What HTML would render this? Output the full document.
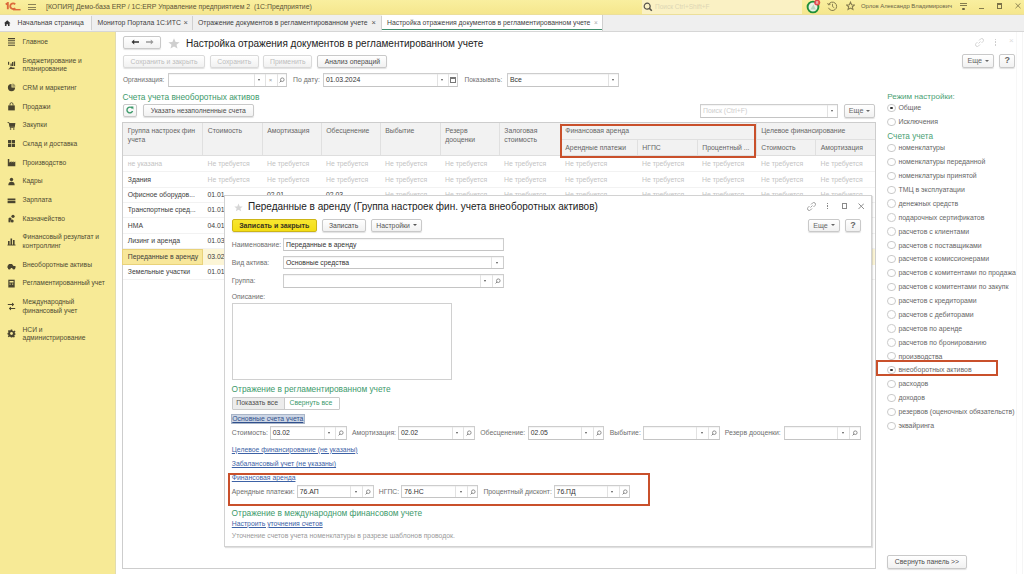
<!DOCTYPE html><html><head><meta charset="utf-8"><style>
*{margin:0;padding:0;box-sizing:border-box}
html,body{width:1024px;height:574px;overflow:hidden;background:#fff;font-family:"Liberation Sans",sans-serif}
.t{position:absolute;white-space:nowrap}
.b{position:absolute}
.btn{position:absolute;border:1px solid #c9c9c9;border-radius:2px;text-align:center;white-space:nowrap;box-shadow:0 1px 1px rgba(0,0,0,0.12)}
.inp{position:absolute;border:1px solid #cdcdcd;border-bottom-color:#c4c4c4;background:#fff;box-shadow:inset 0 1px 1px rgba(0,0,0,0.05)}
.u{text-decoration:underline}
</style></head><body>
<div class="b" style="left:0px;top:0px;width:1024.00px;height:15.00px;background:linear-gradient(#f9ef9f,#f5e68c)"></div>
<div class="b" style="left:0px;top:14.2px;width:1024.00px;height:0.80px;background:#ecdf9a"></div>
<svg class="b" style="left:4.8px;top:2px" width="16" height="8.5" viewBox="0 0 17 9"><path d="M0.8 2.6 L3 1 L3 7.8" fill="none" stroke="#dc6a3c" stroke-width="2"/><path d="M10.8 2.4 A3 3 0 1 0 10.8 6.4" fill="none" stroke="#dc6a3c" stroke-width="2"/><rect x="8.5" y="7.4" width="8" height="1.5" fill="#dc6a3c"/></svg>
<div class="b" style="left:27.5px;top:4.0px;width:8.50px;height:1.10px;background:#8a8256"></div>
<div class="b" style="left:27.5px;top:6.5px;width:8.50px;height:1.10px;background:#8a8256"></div>
<div class="b" style="left:27.5px;top:9.0px;width:8.50px;height:1.10px;background:#8a8256"></div>
<div class="t" style="left:46px;top:1.50px;font-size:6.9px;line-height:10px;color:#5b5438;">[КОПИЯ] Демо-база ERP / 1С:ERP Управление предприятием 2&nbsp; (1С:Предприятие)</div>
<div class="b" style="left:642px;top:0px;width:160.00px;height:14.20px;background:#faf1c4"></div>
<svg class="b" style="left:643px;top:1.5px" width="10" height="10" viewBox="0 0 10 10"><circle cx="4.2" cy="4.2" r="3" fill="none" stroke="#55524a" stroke-width="1.2"/><path d="M6.4 6.4 L8.8 8.8" stroke="#55524a" stroke-width="1.5"/></svg>
<div class="t" style="left:655px;top:1.50px;font-size:6.5px;line-height:10px;color:#ddd6b4;">Поиск Ctrl+Shift+F</div>
<svg class="b" style="left:805px;top:0px" width="17" height="15" viewBox="0 0 17 15"><circle cx="8" cy="7" r="5.4" fill="#e9f3e6" stroke="#1f8f3a" stroke-width="1.9"/><path d="M5.3 9.6 L8.5 4.4 L10.8 9.6 Z" fill="#b8d8c0"/><circle cx="12.2" cy="2.6" r="3" fill="#e24a4a"/><text x="12.2" y="4.3" font-size="4.3" text-anchor="middle" fill="#fff" font-family="Liberation Sans">8</text></svg>
<svg class="b" style="left:827px;top:1px" width="11" height="11" viewBox="0 0 11 11"><path d="M1.6 3.6 A4.2 4.2 0 1 1 1.5 6.8" fill="none" stroke="#857c4e" stroke-width="1"/><path d="M0.6 2 L1.6 4 L3.6 3.2" fill="none" stroke="#857c4e" stroke-width="0.9"/><path d="M5.5 2.8 V5.5 L7.3 6.8" fill="none" stroke="#857c4e" stroke-width="0.9"/></svg>
<svg class="b" style="left:845.5px;top:1.2px" width="9" height="10" viewBox="0 0 11 11"><path d="M5.5 0.8 L6.9 4 L10.3 4.2 L7.7 6.4 L8.5 9.8 L5.5 8 L2.5 9.8 L3.3 6.4 L0.7 4.2 L4.1 4 Z" fill="none" stroke="#857c4e" stroke-width="1.3"/></svg>
<div class="t" style="left:861px;top:1.30px;font-size:5.9px;line-height:10px;color:#6a6346;">Орлов Александр Владимирович</div>
<div class="b" style="left:959.8px;top:2.9px;width:7.50px;height:0.90px;background:#857c4e"></div>
<div class="b" style="left:959.8px;top:5.0px;width:7.50px;height:0.90px;background:#857c4e"></div>
<div class="b" style="left:961.5px;top:7.6px;width:3px;height:2px;background:#6a6346;border-radius:1px"></div>
<div class="b" style="left:978.5px;top:7.6px;width:5.50px;height:1.00px;background:#857c4e"></div>
<div class="b" style="left:996.6px;top:3.3px;width:5.80px;height:5.70px;border:1.3px solid #7a7149;border-top-width:2.2px"></div>
<svg class="b" style="left:1015.2px;top:3.2px" width="6" height="5.5" viewBox="0 0 6 5.5"><path d="M0.5 0.3 L5.5 5.2 M5.5 0.3 L0.5 5.2" stroke="#857c4e" stroke-width="0.9"/></svg>
<div class="b" style="left:0px;top:15px;width:1024.00px;height:16.00px;background:#efefef"></div>
<div class="b" style="left:0px;top:15px;width:91.00px;height:16.00px;background:#f5f5f5"></div>
<div class="b" style="left:0px;top:30.5px;width:1024.00px;height:1.00px;background:#d6d6d6"></div>
<svg class="b" style="left:4.3px;top:19.8px" width="6.5" height="6.5" viewBox="0 0 7 7"><path d="M3.5 0.3 L7 3.5 L6 3.5 L6 6.8 L4.3 6.8 L4.3 4.6 L2.7 4.6 L2.7 6.8 L1 6.8 L1 3.5 L0 3.5 Z" fill="#333"/></svg>
<div class="t" style="left:17.5px;top:18.40px;font-size:6.85px;line-height:10px;color:#3f3f3f;">Начальная страница</div>
<div class="b" style="left:91px;top:16px;width:1.00px;height:14.00px;background:#d0d0d0"></div>
<div class="t" style="left:97.5px;top:18.40px;font-size:6.85px;line-height:10px;color:#3f3f3f;">Монитор Портала 1С:ИТС</div>
<div class="t" style="left:183.5px;top:18.00px;font-size:7.5px;line-height:10px;color:#555;">×</div>
<div class="b" style="left:192px;top:16px;width:1.00px;height:14.00px;background:#d0d0d0"></div>
<div class="t" style="left:198px;top:18.40px;font-size:6.85px;line-height:10px;color:#3f3f3f;">Отражение документов в регламентированном учете</div>
<div class="t" style="left:371.5px;top:18.00px;font-size:7.5px;line-height:10px;color:#555;">×</div>
<div class="b" style="left:381px;top:16px;width:1.00px;height:14.00px;background:#d0d0d0"></div>
<div class="b" style="left:382px;top:15px;width:220.00px;height:16.00px;background:#fff"></div>
<div class="b" style="left:382px;top:28.6px;width:220.00px;height:1.60px;background:#3f8f6e"></div>
<div class="t" style="left:387px;top:17.50px;font-size:6.85px;line-height:10px;color:#3f3f3f;">Настройка отражения документов в регламентированном учете</div>
<div class="t" style="left:594px;top:17.50px;font-size:6.5px;line-height:10px;color:#aaa;">×</div>
<div class="b" style="left:602px;top:15px;width:1.00px;height:16.00px;background:#cfcfcf"></div>
<div class="b" style="left:0px;top:31.5px;width:115.50px;height:542.50px;background:#f7ea96"></div>
<div class="b" style="left:114.6px;top:31.5px;width:1.00px;height:542.50px;background:#e2dcae"></div>
<div class="t" style="left:22.5px;top:36.80px;font-size:6.7px;line-height:10px;color:#4f4a33;">Главное</div>
<svg class="b" style="left:6.5px;top:37.30px" width="9" height="9" viewBox="0 0 9 9" fill="#4a4530" stroke="#4a4530"><g stroke-width="1.1"><path d="M1 1.6H8M1 3.8H8M1 6H8M1 8.2H8"/></g></svg>
<div class="t" style="left:22.5px;top:56.00px;font-size:6.7px;line-height:10px;color:#4f4a33;">Бюджетирование и</div>
<div class="t" style="left:22.5px;top:64.30px;font-size:6.7px;line-height:10px;color:#4f4a33;">планирование</div>
<svg class="b" style="left:6.5px;top:60.65px" width="9" height="9" viewBox="0 0 9 9" fill="#4a4530" stroke="#4a4530"><g stroke="none"><rect x="5" y="1" width="1.3" height="4"/><rect x="6.8" y="0.5" width="1.3" height="4.5"/><rect x="3.5" y="2.5" width="1.2" height="2.5"/><rect x="1" y="0.8" width="1.2" height="3"/><path d="M1 8.5 L4 5.5 L5 6.5 L7.5 6.5 L7.5 8 L4.5 8 Z"/></g></svg>
<div class="t" style="left:22.5px;top:82.50px;font-size:6.7px;line-height:10px;color:#4f4a33;">CRM и маркетинг</div>
<svg class="b" style="left:6.5px;top:83.00px" width="9" height="9" viewBox="0 0 9 9" fill="#4a4530" stroke="#4a4530"><g stroke="none"><path d="M4.5 1 A3.6 3.6 0 1 0 8.1 4.6 L4.5 4.6 Z"/><path d="M5.3 0.6 A3.4 3.4 0 0 1 8.4 3.7 L5.3 3.7 Z" fill-opacity="0.5"/></g></svg>
<div class="t" style="left:22.5px;top:101.50px;font-size:6.7px;line-height:10px;color:#4f4a33;">Продажи</div>
<svg class="b" style="left:6.5px;top:102.00px" width="9" height="9" viewBox="0 0 9 9" fill="#4a4530" stroke="#4a4530"><g><rect x="1.2" y="3.4" width="6.6" height="5" stroke="none"/><path d="M3 3.6 V2.2 A1.5 1.5 0 0 1 6 2.2 V3.6" fill="none" stroke-width="0.9"/></g></svg>
<div class="t" style="left:22.5px;top:120.00px;font-size:6.7px;line-height:10px;color:#4f4a33;">Закупки</div>
<svg class="b" style="left:6.5px;top:120.50px" width="9" height="9" viewBox="0 0 9 9" fill="#4a4530" stroke="#4a4530"><g stroke="none"><path d="M0.5 1 H2 L2.6 2.2 H8.5 L7.6 5.6 H3.2 L3.5 6.3 H7.6 V7 H3 L1.6 1.8 H0.5 Z"/><rect x="2.5" y="2.2" width="5.5" height="3.5"/><circle cx="3.6" cy="8" r="0.8"/><circle cx="6.8" cy="8" r="0.8"/></g></svg>
<div class="t" style="left:22.5px;top:138.80px;font-size:6.7px;line-height:10px;color:#4f4a33;">Склад и доставка</div>
<svg class="b" style="left:6.5px;top:139.30px" width="9" height="9" viewBox="0 0 9 9" fill="#4a4530" stroke="#4a4530"><g stroke="none"><rect x="1" y="1" width="3.2" height="3.2"/><rect x="4.8" y="1" width="3.2" height="3.2"/><rect x="1" y="4.8" width="3.2" height="3.2"/><rect x="4.8" y="4.8" width="3.2" height="3.2"/></g></svg>
<div class="t" style="left:22.5px;top:157.60px;font-size:6.7px;line-height:10px;color:#4f4a33;">Производство</div>
<svg class="b" style="left:6.5px;top:158.10px" width="9" height="9" viewBox="0 0 9 9" fill="#4a4530" stroke="#4a4530"><g stroke="none"><path d="M0.8 8.3 V1 H2.3 V4.5 L4.5 3.2 V4.5 L6.5 3.2 V4.5 L8.3 3.5 V8.3 Z"/></g></svg>
<div class="t" style="left:22.5px;top:176.40px;font-size:6.7px;line-height:10px;color:#4f4a33;">Кадры</div>
<svg class="b" style="left:6.5px;top:176.90px" width="9" height="9" viewBox="0 0 9 9" fill="#4a4530" stroke="#4a4530"><g stroke="none"><circle cx="4.5" cy="2.5" r="1.7"/><path d="M1.3 8.2 Q1.3 4.8 4.5 4.8 Q7.7 4.8 7.7 8.2 Z"/></g></svg>
<div class="t" style="left:22.5px;top:195.00px;font-size:6.7px;line-height:10px;color:#4f4a33;">Зарплата</div>
<svg class="b" style="left:6.5px;top:195.50px" width="9" height="9" viewBox="0 0 9 9" fill="#4a4530" stroke="#4a4530"><g stroke="none"><rect x="0.6" y="2.5" width="7.8" height="1.5"/><rect x="0.6" y="4.6" width="7.8" height="2.6"/></g></svg>
<div class="t" style="left:22.5px;top:213.60px;font-size:6.7px;line-height:10px;color:#4f4a33;">Казначейство</div>
<svg class="b" style="left:6.5px;top:214.10px" width="9" height="9" viewBox="0 0 9 9" fill="#4a4530" stroke="#4a4530"><g stroke="none"><circle cx="6" cy="2.3" r="1.6"/><circle cx="3" cy="5" r="1.6"/><circle cx="5.2" cy="7" r="1.5"/><rect x="1.5" y="6" width="2" height="2.3"/></g></svg>
<div class="t" style="left:22.5px;top:232.30px;font-size:6.7px;line-height:10px;color:#4f4a33;">Финансовый результат и</div>
<div class="t" style="left:22.5px;top:240.80px;font-size:6.7px;line-height:10px;color:#4f4a33;">контроллинг</div>
<svg class="b" style="left:6.5px;top:237.05px" width="9" height="9" viewBox="0 0 9 9" fill="#4a4530" stroke="#4a4530"><g stroke="none"><rect x="1" y="4" width="1.6" height="4"/><rect x="3.5" y="1.5" width="1.6" height="6.5"/><rect x="6" y="3" width="1.6" height="5"/><rect x="0.5" y="7.6" width="8" height="0.9"/></g></svg>
<div class="t" style="left:22.5px;top:260.20px;font-size:6.7px;line-height:10px;color:#4f4a33;">Внеоборотные активы</div>
<svg class="b" style="left:6.5px;top:260.70px" width="9" height="9" viewBox="0 0 9 9" fill="#4a4530" stroke="#4a4530"><g stroke="none"><path d="M0.5 7 V5 L2 3 H5 L6.5 5 H8.5 V7 Z"/><circle cx="2.3" cy="7.2" r="1.3"/><circle cx="6.8" cy="7.2" r="1.3"/></g></svg>
<div class="t" style="left:22.5px;top:278.40px;font-size:6.7px;line-height:10px;color:#4f4a33;">Регламентированный учет</div>
<svg class="b" style="left:6.5px;top:278.90px" width="9" height="9" viewBox="0 0 9 9" fill="#4a4530" stroke="#4a4530"><g stroke="none"><path d="M1.3 0.7 H7.7 V8.5 H1.3 Z"/><rect x="2.5" y="2" width="4" height="1.5" fill="#f7ea96"/><rect x="2.5" y="4.6" width="1.2" height="1" fill="#f7ea96"/><rect x="5" y="4.6" width="1.2" height="1" fill="#f7ea96"/></g></svg>
<div class="t" style="left:22.5px;top:297.30px;font-size:6.7px;line-height:10px;color:#4f4a33;">Международный</div>
<div class="t" style="left:22.5px;top:306.00px;font-size:6.7px;line-height:10px;color:#4f4a33;">финансовый учет</div>
<svg class="b" style="left:6.5px;top:302.15px" width="9" height="9" viewBox="0 0 9 9" fill="#4a4530" stroke="#4a4530"><g stroke-width="1" fill="none"><path d="M0.8 2.5 H6.5 M5 1 L6.8 2.5 L5 4"/><path d="M8.2 6.5 H2.5 M4 5 L2.2 6.5 L4 8"/></g></svg>
<div class="t" style="left:22.5px;top:324.50px;font-size:6.7px;line-height:10px;color:#4f4a33;">НСИ и</div>
<div class="t" style="left:22.5px;top:333.00px;font-size:6.7px;line-height:10px;color:#4f4a33;">администрирование</div>
<svg class="b" style="left:6.5px;top:329.25px" width="9" height="9" viewBox="0 0 9 9" fill="#4a4530" stroke="#4a4530"><g stroke="none"><path d="M3.8 0.5 H5.2 L5.5 1.8 L6.6 2.3 L7.7 1.5 L8.5 2.5 L7.7 3.5 L8 4.5 L8.5 4.5 V5.6 L7.7 5.9 L7.3 6.8 L7.9 7.8 L6.9 8.6 L5.9 7.9 L5.2 8.2 L5 8.5 H3.9 L3.6 7.9 L2.8 7.6 L1.8 8.3 L0.8 7.4 L1.5 6.4 L1.1 5.6 L0.5 5.4 V4.1 L1.2 3.8 L1.5 2.9 L0.9 1.9 L1.9 1 L2.9 1.6 L3.6 1.3 Z"/><circle cx="4.5" cy="4.5" r="1.4" fill="#f7ea96"/></g></svg>
<div class="btn" style="left:123px;top:36px;width:37.7px;height:12.8px;background:linear-gradient(#fff,#f2f2f2)"></div>
<svg class="b" style="left:131px;top:39px" width="9" height="6" viewBox="0 0 9 6"><path d="M0.5 3 L3.2 0.5 L3.2 2.3 L8 2.3 L8 3.7 L3.2 3.7 L3.2 5.5 Z" fill="#333"/></svg>
<svg class="b" style="left:145px;top:39px" width="9" height="6" viewBox="0 0 9 6"><path d="M8.5 3 L5.8 0.5 L5.8 2.3 L1 2.3 L1 3.7 L5.8 3.7 L5.8 5.5 Z" fill="#999"/></svg>
<svg class="b" style="left:167.5px;top:37.5px" width="12" height="11" viewBox="0 0 12 11"><path d="M6 0.3 L7.6 4 L11.6 4.2 L8.5 6.7 L9.5 10.6 L6 8.5 L2.5 10.6 L3.5 6.7 L0.4 4.2 L4.4 4 Z" fill="#cfcfcf"/></svg>
<div class="t" style="left:186px;top:36.6px;font-size:10px;line-height:14px;color:#222">Настройка отражения документов в регламентированном учете</div>
<svg class="b" style="left:975px;top:37.5px" width="9" height="9" viewBox="0 0 9 9"><path d="M3.5 5.5 L5.5 3.5 M2.5 4 L1 5.5 A1.5 1.5 0 0 0 3.5 8 L5 6.5 M6.5 5 L8 3.5 A1.5 1.5 0 0 0 5.5 1 L4 2.5" fill="none" stroke="#cfcfcf" stroke-width="0.9"/></svg>
<div class="b" style="left:994.6px;top:38.5px;width:1.60px;height:1.50px;background:#cfcfcf"></div>
<div class="b" style="left:994.6px;top:41.3px;width:1.60px;height:1.50px;background:#cfcfcf"></div>
<div class="b" style="left:994.6px;top:44.1px;width:1.60px;height:1.50px;background:#cfcfcf"></div>
<div class="t" style="left:1009px;top:36px;font-size:8px;line-height:10px;color:#dcdcdc">×</div>
<div class="btn" style="left:123px;top:54.7px;width:82.00px;height:13.30px;line-height:11.30px;font-size:6.85px;color:#bdbdbd;background:linear-gradient(#fff,#f1f1f1);border-color:#dadada;">Сохранить и закрыть</div>
<div class="btn" style="left:210px;top:54.7px;width:48.50px;height:13.30px;line-height:11.30px;font-size:6.85px;color:#bdbdbd;background:linear-gradient(#fff,#f1f1f1);border-color:#dadada;">Сохранить</div>
<div class="btn" style="left:263.3px;top:54.7px;width:49.00px;height:13.30px;line-height:11.30px;font-size:6.85px;color:#bdbdbd;background:linear-gradient(#fff,#f1f1f1);border-color:#dadada;">Применить</div>
<div class="btn" style="left:317.3px;top:54.7px;width:70.20px;height:13.30px;line-height:11.30px;font-size:6.85px;color:#4d4d4d;background:linear-gradient(#fff,#f1f1f1);border-color:#c9c9c9;">Анализ операций</div>
<div class="btn" style="left:962.2px;top:54.3px;width:32.20px;height:13.70px;line-height:11.70px;font-size:7.2px;color:#666;background:linear-gradient(#fff,#f1f1f1);border-color:#c9c9c9;">Еще <span style="display:inline-block;width:0;height:0;border-left:2px solid transparent;border-right:2px solid transparent;border-top:2.5px solid currentColor;vertical-align:middle;margin-left:1px;position:relative;top:-0.5px"></span></div>
<div class="btn" style="left:999.4px;top:54.3px;width:15.80px;height:13.70px;line-height:11.70px;font-size:9px;color:#666;background:linear-gradient(#fff,#f1f1f1);border-color:#c9c9c9;font-weight:bold">?</div>
<div class="t" style="left:123px;top:75.00px;font-size:6.55px;line-height:10px;color:#6e6e6e;">Организация:</div>
<div class="inp" style="left:168.3px;top:73.2px;width:119.20px;height:13.50px;"></div>
<div class="b" style="left:254.40px;top:74.2px;width:1px;height:11.50px;background:#e2e2e2"></div>
<div class="b" style="left:258.35px;top:78.95px;width:0;height:0;border-left:1.6px solid transparent;border-right:1.6px solid transparent;border-top:2px solid #555;"></div>
<div class="b" style="left:265.30px;top:74.2px;width:1px;height:11.50px;background:#e2e2e2"></div>
<div class="t" style="left:268.65px;top:74.95px;font-size:6px;line-height:10px;color:#999">×</div>
<div class="b" style="left:277.00px;top:74.2px;width:1px;height:11.50px;background:#e2e2e2"></div>
<svg class="b" style="left:279.25px;top:76.95px" width="6" height="6" viewBox="0 0 6 6"><circle cx="3.3" cy="2.7" r="1.8" fill="none" stroke="#777" stroke-width="0.8"/><path d="M2 4 L0.6 5.4" stroke="#777" stroke-width="0.9"/></svg>
<div class="t" style="left:293px;top:75.00px;font-size:6.85px;line-height:10px;color:#6e6e6e;">По дату:</div>
<div class="inp" style="left:323px;top:73.2px;width:135.20px;height:13.50px;"></div>
<div class="t" style="left:326px;top:74.95px;font-size:6.85px;line-height:10px;color:#333;">01.03.2024</div>
<div class="b" style="left:436.50px;top:74.2px;width:1px;height:11.50px;background:#e2e2e2"></div>
<div class="b" style="left:440.75px;top:78.95px;width:0;height:0;border-left:1.6px solid transparent;border-right:1.6px solid transparent;border-top:2px solid #555;"></div>
<div class="b" style="left:448.00px;top:74.2px;width:1px;height:11.50px;background:#e2e2e2"></div>
<div class="b" style="left:450.40px;top:76.95px;width:5.4px;height:5.6px;border:1px solid #777;border-top-width:2px"></div>
<div class="t" style="left:464.5px;top:75.00px;font-size:6.55px;line-height:10px;color:#6e6e6e;">Показывать:</div>
<div class="inp" style="left:507px;top:73.2px;width:112.00px;height:13.50px;"></div>
<div class="t" style="left:510px;top:74.95px;font-size:6.85px;line-height:10px;color:#333;">Все</div>
<div class="b" style="left:607.50px;top:74.2px;width:1px;height:11.50px;background:#e2e2e2"></div>
<div class="b" style="left:611.75px;top:78.95px;width:0;height:0;border-left:1.6px solid transparent;border-right:1.6px solid transparent;border-top:2px solid #555;"></div>
<div class="t" style="left:122.5px;top:90.5px;font-size:8.35px;line-height:12px;color:#3d9a6b">Счета учета внеоборотных активов</div>
<div class="btn" style="left:123px;top:103.6px;width:14.4px;height:13px;background:linear-gradient(#fff,#f2f2f2)"></div>
<svg class="b" style="left:126px;top:106px" width="8" height="8" viewBox="0 0 8 8"><path d="M6.3 2.4 A2.9 2.9 0 1 0 6.6 5" fill="none" stroke="#3d9a6b" stroke-width="1.4"/><path d="M4.6 0.6 L7.4 0.6 L7.4 3.4 Z" fill="#3d9a6b"/></svg>
<div class="btn" style="left:143px;top:103.6px;width:110.50px;height:13.20px;line-height:11.20px;font-size:6.85px;color:#4d4d4d;background:linear-gradient(#fff,#f1f1f1);border-color:#c9c9c9;">Указать незаполненные счета</div>
<div class="inp" style="left:700px;top:104px;width:137.80px;height:13.80px;"></div>
<div class="t" style="left:703px;top:105.90px;font-size:6.85px;line-height:10px;color:#cdcdcd;">Поиск (Ctrl+F)</div>
<div class="b" style="left:826.60px;top:105px;width:1px;height:11.80px;background:#e2e2e2"></div>
<div class="b" style="left:830.70px;top:109.90px;width:0;height:0;border-left:1.6px solid transparent;border-right:1.6px solid transparent;border-top:2px solid #555;"></div>
<div class="btn" style="left:844px;top:104px;width:31.30px;height:13.80px;line-height:11.80px;font-size:7.2px;color:#666;background:linear-gradient(#fff,#f1f1f1);border-color:#c9c9c9;">Еще <span style="display:inline-block;width:0;height:0;border-left:2px solid transparent;border-right:2px solid transparent;border-top:2.5px solid currentColor;vertical-align:middle;margin-left:1px;position:relative;top:-0.5px"></span></div>
<div class="b" style="left:122px;top:122.4px;width:754.00px;height:446.90px;border:1px solid #cdcdcd;background:#fff"></div>
<div class="b" style="left:123px;top:123.4px;width:752.00px;height:31.60px;background:#f2f2f2"></div>
<div class="b" style="left:123px;top:155px;width:752.00px;height:1.00px;background:#dedede"></div>
<div class="b" style="left:202px;top:123.4px;width:1.00px;height:31.60px;background:#e0e0e0"></div>
<div class="b" style="left:261.5px;top:123.4px;width:1.00px;height:31.60px;background:#e0e0e0"></div>
<div class="b" style="left:320.5px;top:123.4px;width:1.00px;height:31.60px;background:#e0e0e0"></div>
<div class="b" style="left:379.5px;top:123.4px;width:1.00px;height:31.60px;background:#e0e0e0"></div>
<div class="b" style="left:439.5px;top:123.4px;width:1.00px;height:31.60px;background:#e0e0e0"></div>
<div class="b" style="left:498.5px;top:123.4px;width:1.00px;height:31.60px;background:#e0e0e0"></div>
<div class="b" style="left:559.5px;top:123.4px;width:1.00px;height:31.60px;background:#e0e0e0"></div>
<div class="b" style="left:636.5px;top:139px;width:1.00px;height:16.00px;background:#e0e0e0"></div>
<div class="b" style="left:696.5px;top:139px;width:1.00px;height:16.00px;background:#e0e0e0"></div>
<div class="b" style="left:755.5px;top:123.4px;width:1.00px;height:31.60px;background:#e0e0e0"></div>
<div class="b" style="left:815px;top:139px;width:1.00px;height:16.00px;background:#e0e0e0"></div>
<div class="b" style="left:559.5px;top:138.5px;width:315.50px;height:1.00px;background:#e0e0e0"></div>
<div class="t" style="left:127.8px;top:126.10px;font-size:6.85px;line-height:10px;color:#666;">Группа настроек фин</div>
<div class="t" style="left:127.8px;top:134.60px;font-size:6.85px;line-height:10px;color:#666;">учета</div>
<div class="t" style="left:207.8px;top:126.10px;font-size:6.85px;line-height:10px;color:#666;">Стоимость</div>
<div class="t" style="left:267.3px;top:126.10px;font-size:6.85px;line-height:10px;color:#666;">Амортизация</div>
<div class="t" style="left:326.3px;top:126.10px;font-size:6.85px;line-height:10px;color:#666;">Обесценение</div>
<div class="t" style="left:385.3px;top:126.10px;font-size:6.85px;line-height:10px;color:#666;">Выбытие</div>
<div class="t" style="left:445.3px;top:126.10px;font-size:6.85px;line-height:10px;color:#666;">Резерв</div>
<div class="t" style="left:445.3px;top:134.60px;font-size:6.85px;line-height:10px;color:#666;">дооценки</div>
<div class="t" style="left:504.3px;top:126.10px;font-size:6.85px;line-height:10px;color:#666;">Залоговая</div>
<div class="t" style="left:504.3px;top:134.60px;font-size:6.85px;line-height:10px;color:#666;">стоимость</div>
<div class="t" style="left:565.3px;top:126.10px;font-size:6.85px;line-height:10px;color:#666;">Финансовая аренда</div>
<div class="t" style="left:565.3px;top:142.60px;font-size:6.85px;line-height:10px;color:#666;">Арендные платежи</div>
<div class="t" style="left:642.3px;top:142.60px;font-size:6.85px;line-height:10px;color:#666;">НГПС</div>
<div class="t" style="left:702.3px;top:142.60px;font-size:6.85px;line-height:10px;color:#666;">Процентный ...</div>
<div class="t" style="left:761.3px;top:126.10px;font-size:6.85px;line-height:10px;color:#666;">Целевое финансирование</div>
<div class="t" style="left:761.3px;top:142.60px;font-size:6.85px;line-height:10px;color:#666;">Стоимость</div>
<div class="t" style="left:820.8px;top:142.60px;font-size:6.85px;line-height:10px;color:#666;">Амортизация</div>
<div class="b" style="left:559.8px;top:124.4px;width:196.20px;height:33.80px;border:2px solid #c9502b"></div>
<div class="b" style="left:123px;top:171.1px;width:752.00px;height:1.00px;background:#f2f2f2"></div>
<div class="t" style="left:127.8px;top:159.20px;font-size:6.85px;line-height:10px;color:#c3c3c3;">не указана</div>
<div class="t" style="left:207.5px;top:159.20px;font-size:6.85px;line-height:10px;color:#c3c3c3;">Не требуется</div>
<div class="t" style="left:267.0px;top:159.20px;font-size:6.85px;line-height:10px;color:#c3c3c3;">Не требуется</div>
<div class="t" style="left:326.0px;top:159.20px;font-size:6.85px;line-height:10px;color:#c3c3c3;">Не требуется</div>
<div class="t" style="left:385.0px;top:159.20px;font-size:6.85px;line-height:10px;color:#c3c3c3;">Не требуется</div>
<div class="t" style="left:445.0px;top:159.20px;font-size:6.85px;line-height:10px;color:#c3c3c3;">Не требуется</div>
<div class="t" style="left:504.0px;top:159.20px;font-size:6.85px;line-height:10px;color:#c3c3c3;">Не требуется</div>
<div class="t" style="left:565.0px;top:159.20px;font-size:6.85px;line-height:10px;color:#c3c3c3;">Не требуется</div>
<div class="t" style="left:642.0px;top:159.20px;font-size:6.85px;line-height:10px;color:#c3c3c3;">Не требуется</div>
<div class="t" style="left:702.0px;top:159.20px;font-size:6.85px;line-height:10px;color:#c3c3c3;">Не требуется</div>
<div class="t" style="left:761.0px;top:159.20px;font-size:6.85px;line-height:10px;color:#c3c3c3;">Не требуется</div>
<div class="t" style="left:820.5px;top:159.20px;font-size:6.85px;line-height:10px;color:#c3c3c3;">Не требуется</div>
<div class="b" style="left:123px;top:186.5px;width:752.00px;height:1.00px;background:#f2f2f2"></div>
<div class="t" style="left:127.8px;top:174.60px;font-size:6.85px;line-height:10px;color:#3d3d3d;">Здания</div>
<div class="t" style="left:207.5px;top:174.60px;font-size:6.85px;line-height:10px;color:#c3c3c3;">Не требуется</div>
<div class="t" style="left:267.0px;top:174.60px;font-size:6.85px;line-height:10px;color:#c3c3c3;">Не требуется</div>
<div class="t" style="left:326.0px;top:174.60px;font-size:6.85px;line-height:10px;color:#c3c3c3;">Не требуется</div>
<div class="t" style="left:385.0px;top:174.60px;font-size:6.85px;line-height:10px;color:#c3c3c3;">Не требуется</div>
<div class="t" style="left:445.0px;top:174.60px;font-size:6.85px;line-height:10px;color:#c3c3c3;">Не требуется</div>
<div class="t" style="left:504.0px;top:174.60px;font-size:6.85px;line-height:10px;color:#c3c3c3;">Не требуется</div>
<div class="t" style="left:565.0px;top:174.60px;font-size:6.85px;line-height:10px;color:#c3c3c3;">Не требуется</div>
<div class="t" style="left:642.0px;top:174.60px;font-size:6.85px;line-height:10px;color:#c3c3c3;">Не требуется</div>
<div class="t" style="left:702.0px;top:174.60px;font-size:6.85px;line-height:10px;color:#c3c3c3;">Не требуется</div>
<div class="t" style="left:761.0px;top:174.60px;font-size:6.85px;line-height:10px;color:#c3c3c3;">Не требуется</div>
<div class="t" style="left:820.5px;top:174.60px;font-size:6.85px;line-height:10px;color:#c3c3c3;">Не требуется</div>
<div class="b" style="left:123px;top:201.9px;width:752.00px;height:1.00px;background:#f2f2f2"></div>
<div class="t" style="left:127.8px;top:190.00px;font-size:6.85px;line-height:10px;color:#3d3d3d;">Офисное оборудов...</div>
<div class="t" style="left:207.5px;top:190.00px;font-size:6.85px;line-height:10px;color:#3d3d3d;">01.01</div>
<div class="t" style="left:267px;top:190.00px;font-size:6.85px;line-height:10px;color:#3d3d3d;">02.01</div>
<div class="t" style="left:326px;top:190.00px;font-size:6.85px;line-height:10px;color:#3d3d3d;">02.03</div>
<div class="t" style="left:385.0px;top:190.00px;font-size:6.85px;line-height:10px;color:#c3c3c3;">Не требуется</div>
<div class="t" style="left:445.0px;top:190.00px;font-size:6.85px;line-height:10px;color:#c3c3c3;">Не требуется</div>
<div class="t" style="left:504.0px;top:190.00px;font-size:6.85px;line-height:10px;color:#c3c3c3;">Не требуется</div>
<div class="t" style="left:565.0px;top:190.00px;font-size:6.85px;line-height:10px;color:#c3c3c3;">Не требуется</div>
<div class="t" style="left:642.0px;top:190.00px;font-size:6.85px;line-height:10px;color:#c3c3c3;">Не требуется</div>
<div class="t" style="left:702.0px;top:190.00px;font-size:6.85px;line-height:10px;color:#c3c3c3;">Не требуется</div>
<div class="t" style="left:761.0px;top:190.00px;font-size:6.85px;line-height:10px;color:#c3c3c3;">Не требуется</div>
<div class="t" style="left:820.5px;top:190.00px;font-size:6.85px;line-height:10px;color:#c3c3c3;">Не требуется</div>
<div class="b" style="left:123px;top:217.29999999999998px;width:752.00px;height:1.00px;background:#f2f2f2"></div>
<div class="t" style="left:127.8px;top:205.40px;font-size:6.85px;line-height:10px;color:#3d3d3d;">Транспортные сред...</div>
<div class="t" style="left:207.5px;top:205.40px;font-size:6.85px;line-height:10px;color:#3d3d3d;">01.01</div>
<div class="b" style="left:123px;top:232.7px;width:752.00px;height:1.00px;background:#f2f2f2"></div>
<div class="t" style="left:127.8px;top:220.80px;font-size:6.85px;line-height:10px;color:#3d3d3d;">НМА</div>
<div class="t" style="left:207.5px;top:220.80px;font-size:6.85px;line-height:10px;color:#3d3d3d;">04.01</div>
<div class="b" style="left:123px;top:248.1px;width:752.00px;height:1.00px;background:#f2f2f2"></div>
<div class="t" style="left:127.8px;top:236.20px;font-size:6.85px;line-height:10px;color:#3d3d3d;">Лизинг и аренда</div>
<div class="t" style="left:207.5px;top:236.20px;font-size:6.85px;line-height:10px;color:#3d3d3d;">01.03</div>
<div class="b" style="left:123px;top:263.5px;width:752.00px;height:1.00px;background:#f2f2f2"></div>
<div class="b" style="left:123px;top:248.8px;width:752.00px;height:15.80px;background:#fcf5d6"></div>
<div class="b" style="left:121.5px;top:248.8px;width:81.50px;height:15.80px;background:#f8e79a;border:1px solid #e9d27a"></div>
<div class="t" style="left:127.8px;top:251.60px;font-size:6.85px;line-height:10px;color:#3d3d3d;">Переданные в аренду</div>
<div class="t" style="left:207.5px;top:251.60px;font-size:6.85px;line-height:10px;color:#3d3d3d;">03.02</div>
<div class="b" style="left:123px;top:278.9px;width:752.00px;height:1.00px;background:#f2f2f2"></div>
<div class="t" style="left:127.8px;top:267.00px;font-size:6.85px;line-height:10px;color:#3d3d3d;">Земельные участки</div>
<div class="t" style="left:207.5px;top:267.00px;font-size:6.85px;line-height:10px;color:#3d3d3d;">01.01</div>
<div class="b" style="left:224.2px;top:194.8px;width:648.0999999999999px;height:352.7px;background:#fff;border:1px solid #d2d2d2;box-shadow:1px 1px 1px rgba(0,0,0,0.12)"></div>
<svg class="b" style="left:233.5px;top:202.5px" width="9" height="9" viewBox="0 0 12 11"><path d="M6 0.3 L7.6 4 L11.6 4.2 L8.5 6.7 L9.5 10.6 L6 8.5 L2.5 10.6 L3.5 6.7 L0.4 4.2 L4.4 4 Z" fill="#d6d6d6"/></svg>
<div class="t" style="left:248px;top:200.3px;font-size:10px;line-height:14px;color:#222">Переданные в аренду (Группа настроек фин. учета внеоборотных активов)</div>
<svg class="b" style="left:806.5px;top:202px" width="9" height="9" viewBox="0 0 9 9"><path d="M3.5 5.5 L5.5 3.5 M2.5 4 L1 5.5 A1.5 1.5 0 0 0 3.5 8 L5 6.5 M6.5 5 L8 3.5 A1.5 1.5 0 0 0 5.5 1 L4 2.5" fill="none" stroke="#8a8a8a" stroke-width="0.8"/></svg>
<div class="b" style="left:826.5px;top:202.6px;width:1.20px;height:1.30px;background:#888"></div>
<div class="b" style="left:826.5px;top:205.3px;width:1.20px;height:1.30px;background:#888"></div>
<div class="b" style="left:826.5px;top:208.0px;width:1.20px;height:1.30px;background:#888"></div>
<div class="b" style="left:842px;top:203.2px;width:5.40px;height:5.40px;border:1.1px solid #8a8a8a"></div>
<svg class="b" style="left:857.5px;top:202.5px" width="6.5" height="6.5" viewBox="0 0 6 6"><path d="M0.5 0.5 L5.5 5.5 M5.5 0.5 L0.5 5.5" stroke="#8a8a8a" stroke-width="0.9"/></svg>
<div class="btn" style="left:231.6px;top:218.6px;width:85.40px;height:13.60px;line-height:11.60px;font-size:7.1px;color:#3a3520;background:linear-gradient(#f8e630,#f3de14);border-color:#cdb516;font-weight:bold;padding-top:1px">Записать и закрыть</div>
<div class="btn" style="left:321.6px;top:218.6px;width:44.00px;height:13.60px;line-height:11.60px;font-size:6.85px;color:#4d4d4d;background:linear-gradient(#fff,#f1f1f1);border-color:#c9c9c9;">Записать</div>
<div class="btn" style="left:371px;top:218.6px;width:51.00px;height:13.60px;line-height:11.60px;font-size:6.85px;color:#555;background:linear-gradient(#fff,#f1f1f1);border-color:#c9c9c9;">Настройки <span style="display:inline-block;width:0;height:0;border-left:2px solid transparent;border-right:2px solid transparent;border-top:2.5px solid currentColor;vertical-align:middle;margin-left:1px;position:relative;top:-0.5px"></span></div>
<div class="btn" style="left:808px;top:218.6px;width:32.00px;height:13.80px;line-height:11.80px;font-size:7.2px;color:#666;background:linear-gradient(#fff,#f1f1f1);border-color:#c9c9c9;">Еще <span style="display:inline-block;width:0;height:0;border-left:2px solid transparent;border-right:2px solid transparent;border-top:2.5px solid currentColor;vertical-align:middle;margin-left:1px;position:relative;top:-0.5px"></span></div>
<div class="btn" style="left:845px;top:218.6px;width:16.00px;height:13.80px;line-height:11.80px;font-size:9px;color:#666;background:linear-gradient(#fff,#f1f1f1);border-color:#c9c9c9;font-weight:bold">?</div>
<div class="t" style="left:231.8px;top:239.50px;font-size:6.85px;line-height:10px;color:#6e6e6e;">Наименование:</div>
<div class="inp" style="left:283px;top:238px;width:220.50px;height:13.20px;"></div>
<div class="t" style="left:286px;top:239.60px;font-size:6.85px;line-height:10px;color:#333;">Переданные в аренду</div>
<div class="t" style="left:231.8px;top:257.50px;font-size:6.85px;line-height:10px;color:#6e6e6e;">Вид актива:</div>
<div class="inp" style="left:283px;top:256px;width:220.50px;height:13.40px;"></div>
<div class="t" style="left:286px;top:257.70px;font-size:6.85px;line-height:10px;color:#333;">Основные средства</div>
<div class="b" style="left:490.70px;top:257px;width:1px;height:11.40px;background:#e2e2e2"></div>
<div class="b" style="left:495.60px;top:261.70px;width:0;height:0;border-left:1.6px solid transparent;border-right:1.6px solid transparent;border-top:2px solid #555;"></div>
<div class="t" style="left:231.8px;top:276.00px;font-size:6.85px;line-height:10px;color:#6e6e6e;">Группа:</div>
<div class="inp" style="left:283px;top:274.2px;width:220.50px;height:13.40px;"></div>
<div class="b" style="left:480.00px;top:275.2px;width:1px;height:11.40px;background:#e2e2e2"></div>
<div class="b" style="left:484.30px;top:279.90px;width:0;height:0;border-left:1.6px solid transparent;border-right:1.6px solid transparent;border-top:2px solid #555;"></div>
<div class="b" style="left:491.60px;top:275.2px;width:1px;height:11.40px;background:#e2e2e2"></div>
<svg class="b" style="left:494.55px;top:277.90px" width="6" height="6" viewBox="0 0 6 6"><circle cx="3.3" cy="2.7" r="1.8" fill="none" stroke="#777" stroke-width="0.8"/><path d="M2 4 L0.6 5.4" stroke="#777" stroke-width="0.9"/></svg>
<div class="t" style="left:231.8px;top:291.50px;font-size:6.85px;line-height:10px;color:#6e6e6e;">Описание:</div>
<div class="b" style="left:231.8px;top:303px;width:219.8px;height:76.6px;border:1px solid #d0d0d0;background:#fff"></div>
<div class="t" style="left:231.6px;top:383.3px;font-size:8.33px;line-height:12px;color:#3d9a6b">Отражение в регламентированном учете</div>
<div class="b" style="left:231.8px;top:396.7px;width:108px;height:13.2px;border:1px solid #cacaca;border-radius:1px"></div>
<div class="b" style="left:232.8px;top:397.7px;width:51.20px;height:11.20px;background:#ececec"></div>
<div class="b" style="left:284px;top:397.7px;width:1.00px;height:11.20px;background:#cacaca"></div>
<div class="t" style="left:236.3px;top:398.30px;font-size:6.85px;line-height:10px;color:#4d4d4d;">Показать все</div>
<div class="t" style="left:289.5px;top:398.30px;font-size:6.85px;line-height:10px;color:#3d9a6b;">Свернуть все</div>
<div class="b" style="left:231.3px;top:414px;width:73.70px;height:10.00px;border:1px solid #a9b5c8;background:#cdd6e5"></div>
<div class="t" style="left:232.3px;top:414.00px;font-size:6.85px;line-height:10px;color:#2f4f8c;"><span class="u">Основные счета учета</span></div>
<div class="t" style="left:231.8px;top:427.80px;font-size:6.85px;line-height:10px;color:#6e6e6e;">Стоимость:</div>
<div class="inp" style="left:269.7px;top:426.2px;width:77.10px;height:13.60px;"></div>
<div class="t" style="left:272.7px;top:428.00px;font-size:6.85px;line-height:10px;color:#333;">03.02</div>
<div class="b" style="left:323.50px;top:427.2px;width:1px;height:11.60px;background:#e2e2e2"></div>
<div class="b" style="left:327.85px;top:432.00px;width:0;height:0;border-left:1.6px solid transparent;border-right:1.6px solid transparent;border-top:2px solid #555;"></div>
<div class="b" style="left:335.20px;top:427.2px;width:1px;height:11.60px;background:#e2e2e2"></div>
<svg class="b" style="left:338.00px;top:430.00px" width="6" height="6" viewBox="0 0 6 6"><circle cx="3.3" cy="2.7" r="1.8" fill="none" stroke="#777" stroke-width="0.8"/><path d="M2 4 L0.6 5.4" stroke="#777" stroke-width="0.9"/></svg>
<div class="t" style="left:352px;top:427.80px;font-size:6.85px;line-height:10px;color:#6e6e6e;">Амортизация:</div>
<div class="inp" style="left:398px;top:426.2px;width:77.00px;height:13.60px;"></div>
<div class="t" style="left:401px;top:428.00px;font-size:6.85px;line-height:10px;color:#333;">02.02</div>
<div class="b" style="left:451.70px;top:427.2px;width:1px;height:11.60px;background:#e2e2e2"></div>
<div class="b" style="left:456.05px;top:432.00px;width:0;height:0;border-left:1.6px solid transparent;border-right:1.6px solid transparent;border-top:2px solid #555;"></div>
<div class="b" style="left:463.40px;top:427.2px;width:1px;height:11.60px;background:#e2e2e2"></div>
<svg class="b" style="left:466.20px;top:430.00px" width="6" height="6" viewBox="0 0 6 6"><circle cx="3.3" cy="2.7" r="1.8" fill="none" stroke="#777" stroke-width="0.8"/><path d="M2 4 L0.6 5.4" stroke="#777" stroke-width="0.9"/></svg>
<div class="t" style="left:480.3px;top:427.80px;font-size:6.85px;line-height:10px;color:#6e6e6e;">Обесценение:</div>
<div class="inp" style="left:527.8px;top:426.2px;width:76.60px;height:13.60px;"></div>
<div class="t" style="left:530.8px;top:428.00px;font-size:6.85px;line-height:10px;color:#333;">02.05</div>
<div class="b" style="left:581.10px;top:427.2px;width:1px;height:11.60px;background:#e2e2e2"></div>
<div class="b" style="left:585.45px;top:432.00px;width:0;height:0;border-left:1.6px solid transparent;border-right:1.6px solid transparent;border-top:2px solid #555;"></div>
<div class="b" style="left:592.80px;top:427.2px;width:1px;height:11.60px;background:#e2e2e2"></div>
<svg class="b" style="left:595.60px;top:430.00px" width="6" height="6" viewBox="0 0 6 6"><circle cx="3.3" cy="2.7" r="1.8" fill="none" stroke="#777" stroke-width="0.8"/><path d="M2 4 L0.6 5.4" stroke="#777" stroke-width="0.9"/></svg>
<div class="t" style="left:609.8px;top:427.80px;font-size:6.85px;line-height:10px;color:#6e6e6e;">Выбытие:</div>
<div class="inp" style="left:642.8px;top:426.2px;width:76.80px;height:13.60px;"></div>
<div class="b" style="left:696.30px;top:427.2px;width:1px;height:11.60px;background:#e2e2e2"></div>
<div class="b" style="left:700.65px;top:432.00px;width:0;height:0;border-left:1.6px solid transparent;border-right:1.6px solid transparent;border-top:2px solid #555;"></div>
<div class="b" style="left:708.00px;top:427.2px;width:1px;height:11.60px;background:#e2e2e2"></div>
<svg class="b" style="left:710.80px;top:430.00px" width="6" height="6" viewBox="0 0 6 6"><circle cx="3.3" cy="2.7" r="1.8" fill="none" stroke="#777" stroke-width="0.8"/><path d="M2 4 L0.6 5.4" stroke="#777" stroke-width="0.9"/></svg>
<div class="t" style="left:724.8px;top:427.80px;font-size:6.85px;line-height:10px;color:#6e6e6e;">Резерв дооценки:</div>
<div class="inp" style="left:784px;top:426.2px;width:76.50px;height:13.60px;"></div>
<div class="b" style="left:837.20px;top:427.2px;width:1px;height:11.60px;background:#e2e2e2"></div>
<div class="b" style="left:841.55px;top:432.00px;width:0;height:0;border-left:1.6px solid transparent;border-right:1.6px solid transparent;border-top:2px solid #555;"></div>
<div class="b" style="left:848.90px;top:427.2px;width:1px;height:11.60px;background:#e2e2e2"></div>
<svg class="b" style="left:851.70px;top:430.00px" width="6" height="6" viewBox="0 0 6 6"><circle cx="3.3" cy="2.7" r="1.8" fill="none" stroke="#777" stroke-width="0.8"/><path d="M2 4 L0.6 5.4" stroke="#777" stroke-width="0.9"/></svg>
<div class="t" style="left:231.8px;top:444.80px;font-size:6.85px;line-height:10px;color:#3d62a6;"><span class="u">Целевое финансирование (не указаны)</span></div>
<div class="t" style="left:231.8px;top:459.00px;font-size:6.85px;line-height:10px;color:#3d62a6;"><span class="u">Забалансовый учет (не указаны)</span></div>
<div class="b" style="left:228.2px;top:472.6px;width:422.30px;height:33.60px;border:2px solid #c9502b"></div>
<div class="t" style="left:231.8px;top:473.00px;font-size:6.85px;line-height:10px;color:#3d62a6;"><span class="u">Финансовая аренда</span></div>
<div class="t" style="left:231.8px;top:486.80px;font-size:6.85px;line-height:10px;color:#6e6e6e;">Арендные платежи:</div>
<div class="inp" style="left:296.8px;top:485.2px;width:76.80px;height:13.20px;"></div>
<div class="t" style="left:299.8px;top:486.80px;font-size:6.85px;line-height:10px;color:#333;">76.АП</div>
<div class="b" style="left:350.30px;top:486.2px;width:1px;height:11.20px;background:#e2e2e2"></div>
<div class="b" style="left:354.65px;top:490.80px;width:0;height:0;border-left:1.6px solid transparent;border-right:1.6px solid transparent;border-top:2px solid #555;"></div>
<div class="b" style="left:362.00px;top:486.2px;width:1px;height:11.20px;background:#e2e2e2"></div>
<svg class="b" style="left:364.80px;top:488.80px" width="6" height="6" viewBox="0 0 6 6"><circle cx="3.3" cy="2.7" r="1.8" fill="none" stroke="#777" stroke-width="0.8"/><path d="M2 4 L0.6 5.4" stroke="#777" stroke-width="0.9"/></svg>
<div class="t" style="left:378.8px;top:486.80px;font-size:6.85px;line-height:10px;color:#6e6e6e;">НГПС:</div>
<div class="inp" style="left:401.3px;top:485.2px;width:77.20px;height:13.20px;"></div>
<div class="t" style="left:404.3px;top:486.80px;font-size:6.85px;line-height:10px;color:#333;">76.НС</div>
<div class="b" style="left:455.20px;top:486.2px;width:1px;height:11.20px;background:#e2e2e2"></div>
<div class="b" style="left:459.55px;top:490.80px;width:0;height:0;border-left:1.6px solid transparent;border-right:1.6px solid transparent;border-top:2px solid #555;"></div>
<div class="b" style="left:466.90px;top:486.2px;width:1px;height:11.20px;background:#e2e2e2"></div>
<svg class="b" style="left:469.70px;top:488.80px" width="6" height="6" viewBox="0 0 6 6"><circle cx="3.3" cy="2.7" r="1.8" fill="none" stroke="#777" stroke-width="0.8"/><path d="M2 4 L0.6 5.4" stroke="#777" stroke-width="0.9"/></svg>
<div class="t" style="left:483.4px;top:486.80px;font-size:6.85px;line-height:10px;color:#6e6e6e;">Процентный дисконт:</div>
<div class="inp" style="left:553.6px;top:485.2px;width:76.80px;height:13.20px;"></div>
<div class="t" style="left:556.6px;top:486.80px;font-size:6.85px;line-height:10px;color:#333;">76.ПД</div>
<div class="b" style="left:607.10px;top:486.2px;width:1px;height:11.20px;background:#e2e2e2"></div>
<div class="b" style="left:611.45px;top:490.80px;width:0;height:0;border-left:1.6px solid transparent;border-right:1.6px solid transparent;border-top:2px solid #555;"></div>
<div class="b" style="left:618.80px;top:486.2px;width:1px;height:11.20px;background:#e2e2e2"></div>
<svg class="b" style="left:621.60px;top:488.80px" width="6" height="6" viewBox="0 0 6 6"><circle cx="3.3" cy="2.7" r="1.8" fill="none" stroke="#777" stroke-width="0.8"/><path d="M2 4 L0.6 5.4" stroke="#777" stroke-width="0.9"/></svg>
<div class="t" style="left:231.6px;top:506.6px;font-size:8.33px;line-height:12px;color:#3d9a6b">Отражение в международном финансовом учете</div>
<div class="t" style="left:231.8px;top:518.80px;font-size:6.85px;line-height:10px;color:#3d62a6;"><span class="u">Настроить уточнения счетов</span></div>
<div class="t" style="left:231.8px;top:531.20px;font-size:6.85px;line-height:10px;color:#9a9a9a;">Уточнение счетов учета номенклатуры в разрезе шаблонов проводок.</div>
<div class="t" style="left:887.3px;top:90.8px;font-size:8.05px;line-height:12px;color:#4a9f74">Режим настройки:</div>
<div class="b" style="left:887.2px;top:103.90px;width:8.4px;height:8.4px;border:1px solid #cacaca;border-radius:50%;background:#fff"></div>
<div class="b" style="left:890.1px;top:106.80px;width:2.6px;height:2.6px;border-radius:50%;background:#333"></div>
<div class="t" style="left:898.4px;top:103.40px;font-size:6.95px;line-height:10px;color:#666;">Общие</div>
<div class="b" style="left:887.2px;top:117.50px;width:8.4px;height:8.4px;border:1px solid #cacaca;border-radius:50%;background:#fff"></div>
<div class="t" style="left:898.4px;top:117.00px;font-size:6.95px;line-height:10px;color:#666;">Исключения</div>
<div class="t" style="left:887.3px;top:130.8px;font-size:8.2px;line-height:12px;color:#4a9f74">Счета учета</div>
<div class="b" style="left:887.2px;top:143.90px;width:8.4px;height:8.4px;border:1px solid #cacaca;border-radius:50%;background:#fff"></div>
<div class="t" style="left:898.4px;top:143.40px;font-size:6.95px;line-height:10px;color:#666;">номенклатуры</div>
<div class="b" style="left:887.2px;top:157.78px;width:8.4px;height:8.4px;border:1px solid #cacaca;border-radius:50%;background:#fff"></div>
<div class="t" style="left:898.4px;top:157.28px;font-size:6.95px;line-height:10px;color:#666;">номенклатуры переданной</div>
<div class="b" style="left:887.2px;top:171.66px;width:8.4px;height:8.4px;border:1px solid #cacaca;border-radius:50%;background:#fff"></div>
<div class="t" style="left:898.4px;top:171.16px;font-size:6.95px;line-height:10px;color:#666;">номенклатуры принятой</div>
<div class="b" style="left:887.2px;top:185.54px;width:8.4px;height:8.4px;border:1px solid #cacaca;border-radius:50%;background:#fff"></div>
<div class="t" style="left:898.4px;top:185.04px;font-size:6.95px;line-height:10px;color:#666;">ТМЦ в эксплуатации</div>
<div class="b" style="left:887.2px;top:199.42px;width:8.4px;height:8.4px;border:1px solid #cacaca;border-radius:50%;background:#fff"></div>
<div class="t" style="left:898.4px;top:198.92px;font-size:6.95px;line-height:10px;color:#666;">денежных средств</div>
<div class="b" style="left:887.2px;top:213.30px;width:8.4px;height:8.4px;border:1px solid #cacaca;border-radius:50%;background:#fff"></div>
<div class="t" style="left:898.4px;top:212.80px;font-size:6.95px;line-height:10px;color:#666;">подарочных сертификатов</div>
<div class="b" style="left:887.2px;top:227.18px;width:8.4px;height:8.4px;border:1px solid #cacaca;border-radius:50%;background:#fff"></div>
<div class="t" style="left:898.4px;top:226.68px;font-size:6.95px;line-height:10px;color:#666;">расчетов с клиентами</div>
<div class="b" style="left:887.2px;top:241.06px;width:8.4px;height:8.4px;border:1px solid #cacaca;border-radius:50%;background:#fff"></div>
<div class="t" style="left:898.4px;top:240.56px;font-size:6.95px;line-height:10px;color:#666;">расчетов с поставщиками</div>
<div class="b" style="left:887.2px;top:254.94px;width:8.4px;height:8.4px;border:1px solid #cacaca;border-radius:50%;background:#fff"></div>
<div class="t" style="left:898.4px;top:254.44px;font-size:6.95px;line-height:10px;color:#666;">расчетов с комиссионерами</div>
<div class="b" style="left:887.2px;top:268.82px;width:8.4px;height:8.4px;border:1px solid #cacaca;border-radius:50%;background:#fff"></div>
<div class="t" style="left:898.4px;top:268.32px;font-size:6.95px;line-height:10px;color:#666;">расчетов с комитентами по продажа</div>
<div class="b" style="left:887.2px;top:282.70px;width:8.4px;height:8.4px;border:1px solid #cacaca;border-radius:50%;background:#fff"></div>
<div class="t" style="left:898.4px;top:282.20px;font-size:6.95px;line-height:10px;color:#666;">расчетов с комитентами по закупк</div>
<div class="b" style="left:887.2px;top:296.58px;width:8.4px;height:8.4px;border:1px solid #cacaca;border-radius:50%;background:#fff"></div>
<div class="t" style="left:898.4px;top:296.08px;font-size:6.95px;line-height:10px;color:#666;">расчетов с кредиторами</div>
<div class="b" style="left:887.2px;top:310.46px;width:8.4px;height:8.4px;border:1px solid #cacaca;border-radius:50%;background:#fff"></div>
<div class="t" style="left:898.4px;top:309.96px;font-size:6.95px;line-height:10px;color:#666;">расчетов с дебиторами</div>
<div class="b" style="left:887.2px;top:324.34px;width:8.4px;height:8.4px;border:1px solid #cacaca;border-radius:50%;background:#fff"></div>
<div class="t" style="left:898.4px;top:323.84px;font-size:6.95px;line-height:10px;color:#666;">расчетов по аренде</div>
<div class="b" style="left:887.2px;top:338.22px;width:8.4px;height:8.4px;border:1px solid #cacaca;border-radius:50%;background:#fff"></div>
<div class="t" style="left:898.4px;top:337.72px;font-size:6.95px;line-height:10px;color:#666;">расчетов по бронированию</div>
<div class="b" style="left:887.2px;top:352.10px;width:8.4px;height:8.4px;border:1px solid #cacaca;border-radius:50%;background:#fff"></div>
<div class="t" style="left:898.4px;top:351.60px;font-size:6.95px;line-height:10px;color:#666;">производства</div>
<div class="b" style="left:887.2px;top:365.98px;width:8.4px;height:8.4px;border:1px solid #cacaca;border-radius:50%;background:#fff"></div>
<div class="b" style="left:890.1px;top:368.88px;width:2.6px;height:2.6px;border-radius:50%;background:#333"></div>
<div class="t" style="left:898.4px;top:365.48px;font-size:6.95px;line-height:10px;color:#666;">внеоборотных активов</div>
<div class="b" style="left:887.2px;top:379.86px;width:8.4px;height:8.4px;border:1px solid #cacaca;border-radius:50%;background:#fff"></div>
<div class="t" style="left:898.4px;top:379.36px;font-size:6.95px;line-height:10px;color:#666;">расходов</div>
<div class="b" style="left:887.2px;top:393.74px;width:8.4px;height:8.4px;border:1px solid #cacaca;border-radius:50%;background:#fff"></div>
<div class="t" style="left:898.4px;top:393.24px;font-size:6.95px;line-height:10px;color:#666;">доходов</div>
<div class="b" style="left:887.2px;top:407.62px;width:8.4px;height:8.4px;border:1px solid #cacaca;border-radius:50%;background:#fff"></div>
<div class="t" style="left:898.4px;top:407.12px;font-size:6.95px;line-height:10px;color:#666;">резервов (оценочных обязательств)</div>
<div class="b" style="left:887.2px;top:421.50px;width:8.4px;height:8.4px;border:1px solid #cacaca;border-radius:50%;background:#fff"></div>
<div class="t" style="left:898.4px;top:421.00px;font-size:6.95px;line-height:10px;color:#666;">эквайринга</div>
<div class="b" style="left:876px;top:360px;width:122.00px;height:16.20px;border:2px solid #c9502b"></div>
<div class="btn" style="left:887.2px;top:554.8px;width:79.60px;height:13.80px;line-height:11.80px;font-size:6.85px;color:#4d4d4d;background:linear-gradient(#fff,#f1f1f1);border-color:#c9c9c9;">Свернуть панель &gt;&gt;</div>
<div class="b" style="left:1016px;top:31.5px;width:1.00px;height:542.50px;background:#f7f7f7"></div>
<div class="b" style="left:1022px;top:31.5px;width:1.00px;height:542.50px;background:#f5f5f5"></div>
</body></html>
